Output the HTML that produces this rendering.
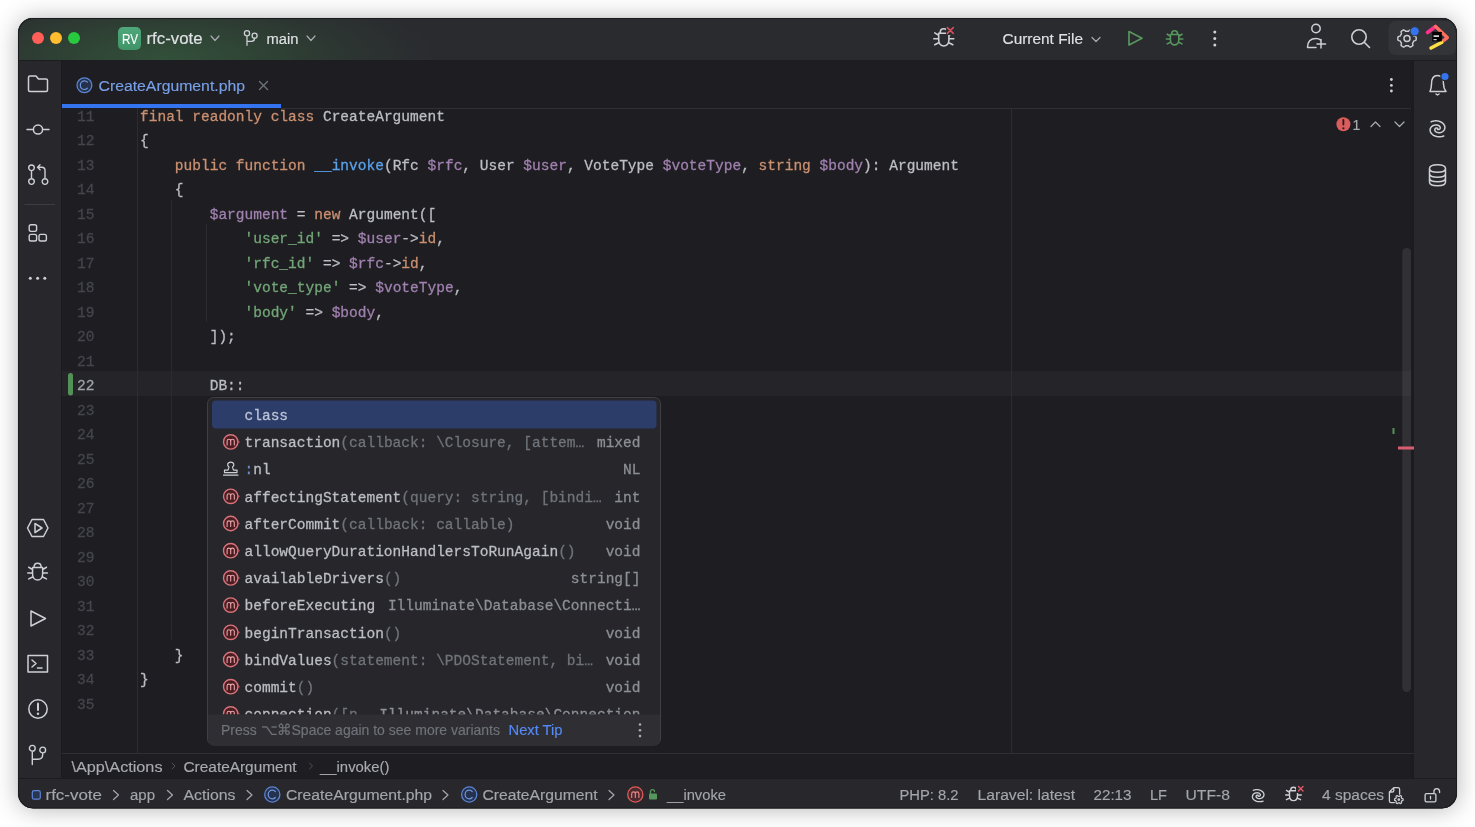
<!DOCTYPE html>
<html><head><meta charset="utf-8"><title>PhpStorm</title>
<style>
html,body{margin:0;padding:0;background:#FFFFFF;width:1475px;height:827px;overflow:hidden}
#win{position:absolute;left:18px;top:18px;width:1439px;height:790px;border-radius:15px;box-shadow:0 1px 24px rgba(0,0,0,0.30),0 0 1px rgba(0,0,0,0.35)}
svg{position:absolute;left:0;top:0;will-change:transform}
.s{font-family:"Liberation Sans",sans-serif}
.m{font-family:"Liberation Mono",monospace}
text{white-space:pre}
</style></head>
<body>
<div id="win"></div>
<svg width="1475" height="827" viewBox="0 0 1475 827">
<rect x="18" y="18" width="1439" height="790.5" rx="15" fill="#1E1E22" />
<defs><radialGradient id="tg" cx="165" cy="58" r="270" gradientUnits="userSpaceOnUse" gradientTransform="translate(165 58) scale(1 0.28) translate(-165 -58)"><stop offset="0" stop-color="#32503A"/><stop offset="0.35" stop-color="#2F4335"/><stop offset="0.7" stop-color="#2C3431"/><stop offset="1" stop-color="#2A2B2F"/></radialGradient><linearGradient id="rvg" x1="0" y1="0" x2="0" y2="1"><stop offset="0" stop-color="#4FA77A"/><stop offset="1" stop-color="#3F9468"/></linearGradient><clipPath id="winclip"><rect x="18" y="18" width="1439" height="790.5" rx="15"/></clipPath><clipPath id="popclip"><rect x="208" y="398" width="452" height="316.5"/></clipPath></defs>
<g clip-path="url(#winclip)">
<rect x="18" y="18" width="1439" height="43" rx="0" fill="#2A2B2F" />
<rect x="18" y="18" width="1439" height="43" rx="0" fill="url(#tg)" />
<line x1="18" y1="60.5" x2="1457" y2="60.5" stroke="#1C1D20" stroke-width="1" />
<circle cx="38" cy="38" r="6" fill="#FF5F57"/>
<circle cx="56" cy="38" r="6" fill="#FEBC2E"/>
<circle cx="74" cy="38" r="6" fill="#28C840"/>
<rect x="118" y="27" width="23" height="23" rx="5" fill="url(#rvg)" />
<text x="122" y="44" class="s" font-size="14.5" fill="#FFFFFF" stroke="#FFFFFF" stroke-width="0.15" textLength="16" lengthAdjust="spacingAndGlyphs" >RV</text>
<text x="146.5" y="43.7" class="s" font-size="16" fill="#DFE1E5" stroke="#DFE1E5" stroke-width="0.15" textLength="56" lengthAdjust="spacingAndGlyphs" >rfc-vote</text>
<path d="M211 36 L215 40.5 L219 36" stroke="#A8ABB0" stroke-width="1.2" fill="none" stroke-linecap="round" stroke-linejoin="round" />
<path d="M247 33.3 m-2.6 0 a2.6 2.6 0 1 0 5.2 0 a2.6 2.6 0 1 0 -5.2 0 M247 35.9 V45.3 M247 41.4 H251.5 Q254.6 41.4 254.6 38.3 M254.6 35.7 m-2.5 0 a2.5 2.5 0 1 0 5 0 a2.5 2.5 0 1 0 -5 0" stroke="#CED0D6" stroke-width="1.3" fill="none" stroke-linecap="round" stroke-linejoin="round" />
<text x="266.5" y="43.7" class="s" font-size="15.5" fill="#DFE1E5" stroke="#DFE1E5" stroke-width="0.15" textLength="32" lengthAdjust="spacingAndGlyphs" >main</text>
<path d="M307 36 L311 40.5 L315 36" stroke="#A8ABB0" stroke-width="1.2" fill="none" stroke-linecap="round" stroke-linejoin="round" />
<path d="M938.68 33.31 L948.92 33.31 L948.92 39.78 C948.92 48.07 938.68 48.07 938.68 39.78 Z M940.26 33.31 L940.26 32.33 C940.26 27.58 947.34 27.58 947.34 32.33 L947.34 33.31 M938.68 35.38 L934.77 32.94 M948.92 35.38 L952.83 32.94 M938.68 38.80 L933.80 38.80 M948.92 38.80 L953.80 38.80 M938.68 42.83 L934.77 44.78 M948.92 42.83 L952.83 44.78" stroke="#CED0D6" stroke-width="1.6" fill="none" stroke-linecap="round" stroke-linejoin="round" />
<rect x="946" y="26" width="9.5" height="9" rx="0" fill="#2A2B2F" />
<path d="M947.3 27.6 L953.3 33.4 M953.3 27.6 L947.3 33.4" stroke="#D9505F" stroke-width="1.5" fill="none" stroke-linecap="round" stroke-linejoin="round" />
<text x="1002.5" y="43.6" class="s" font-size="15.5" fill="#DFE1E5" stroke="#DFE1E5" stroke-width="0.15" textLength="80.5" lengthAdjust="spacingAndGlyphs" >Current File</text>
<path d="M1092 37.5 L1096 41.5 L1100 37.5" stroke="#A8ABB0" stroke-width="1.2" fill="none" stroke-linecap="round" stroke-linejoin="round" />
<path d="M1129 31.5 L1142 38.2 L1129 45 Z" stroke="#57965C" stroke-width="1.7" fill="none" stroke-linecap="round" stroke-linejoin="round" />
<path d="M1170.40 34.50 L1178.80 34.50 L1178.80 39.80 C1178.80 46.60 1170.40 46.60 1170.40 39.80 Z M1171.70 34.50 L1171.70 33.70 C1171.70 29.80 1177.50 29.80 1177.50 33.70 L1177.50 34.50 M1170.40 36.20 L1167.20 34.20 M1178.80 36.20 L1182.00 34.20 M1170.40 39.00 L1166.40 39.00 M1178.80 39.00 L1182.80 39.00 M1170.40 42.30 L1167.20 43.90 M1178.80 42.30 L1182.00 43.90" stroke="#57965C" stroke-width="1.6" fill="none" stroke-linecap="round" stroke-linejoin="round" />
<circle cx="1214.8" cy="32.1" r="1.5" fill="#CED0D6"/>
<circle cx="1214.8" cy="38.6" r="1.5" fill="#CED0D6"/>
<circle cx="1214.8" cy="45.1" r="1.5" fill="#CED0D6"/>
<path d="M1316 28.5 m-4.2 0 a4.2 4.2 0 1 0 8.4 0 a4.2 4.2 0 1 0 -8.4 0 M1307.5 47.5 C1307.5 41 1311 38.5 1316 38.5 C1318 38.5 1319.5 39 1320.5 40 M1307.5 47.5 H1316 M1321 39.5 V48 M1317 44 H1325.5" stroke="#CED0D6" stroke-width="1.5" fill="none" stroke-linecap="round" stroke-linejoin="round" />
<path d="M1359 37 m-7.2 0 a7.2 7.2 0 1 0 14.4 0 a7.2 7.2 0 1 0 -14.4 0 M1364.5 42.5 L1369.5 47.5" stroke="#CED0D6" stroke-width="1.6" fill="none" stroke-linecap="round" stroke-linejoin="round" />
<rect x="1388.5" y="21" width="67.5" height="34" rx="7" fill="#323438" />
<path d="M1416.20 38.50 L1416.18 39.10 L1416.12 39.70 L1415.87 40.26 L1414.92 40.62 L1413.97 40.87 L1413.65 41.26 L1413.46 41.68 L1413.24 42.10 L1412.99 42.50 L1412.71 42.88 L1412.53 43.35 L1412.80 44.30 L1412.96 45.30 L1412.60 45.80 L1412.11 46.15 L1411.60 46.47 L1411.07 46.75 L1410.52 47.00 L1409.91 47.06 L1409.12 46.42 L1408.44 45.72 L1407.94 45.64 L1407.47 45.68 L1407.00 45.70 L1406.53 45.68 L1406.06 45.64 L1405.56 45.72 L1404.88 46.42 L1404.09 47.06 L1403.48 47.00 L1402.93 46.75 L1402.40 46.47 L1401.89 46.15 L1401.40 45.80 L1401.04 45.30 L1401.20 44.30 L1401.47 43.35 L1401.29 42.88 L1401.01 42.50 L1400.76 42.10 L1400.54 41.68 L1400.35 41.26 L1400.03 40.87 L1399.08 40.62 L1398.13 40.26 L1397.88 39.70 L1397.82 39.10 L1397.80 38.50 L1397.82 37.90 L1397.88 37.30 L1398.13 36.74 L1399.08 36.38 L1400.03 36.13 L1400.35 35.74 L1400.54 35.32 L1400.76 34.90 L1401.01 34.50 L1401.29 34.12 L1401.47 33.65 L1401.20 32.70 L1401.04 31.70 L1401.40 31.20 L1401.89 30.85 L1402.40 30.53 L1402.93 30.25 L1403.48 30.00 L1404.09 29.94 L1404.88 30.58 L1405.56 31.28 L1406.06 31.36 L1406.53 31.32 L1407.00 31.30 L1407.47 31.32 L1407.94 31.36 L1408.44 31.28 L1409.12 30.58 L1409.91 29.94 L1410.52 30.00 L1411.07 30.25 L1411.60 30.53 L1412.11 30.85 L1412.60 31.20 L1412.96 31.70 L1412.80 32.70 L1412.53 33.65 L1412.71 34.12 L1412.99 34.50 L1413.24 34.90 L1413.46 35.32 L1413.65 35.74 L1413.97 36.13 L1414.92 36.38 L1415.87 36.74 L1416.12 37.30 L1416.18 37.90 Z" stroke="#CED0D6" stroke-width="1.4" fill="none" stroke-linecap="round" stroke-linejoin="round" />
<circle cx="1407" cy="38.5" r="3.02" stroke="#CED0D6" stroke-width="1.4" fill="none"/>
<circle cx="1414.7" cy="31.3" r="4.6" fill="#3574F0" stroke="#323438" stroke-width="1"/>
<g stroke-linecap="round" stroke-linejoin="round" fill="none"><path d="M1427.5 32.5 L1435.5 26.5" stroke="#FF318C" stroke-width="3.6"/><path d="M1435.5 26.5 L1447.3 37.6 L1441.5 42.3" stroke="#FF6F61" stroke-width="3.4"/><path d="M1441.5 42.5 L1431 48" stroke="#FDE047" stroke-width="3.6"/></g>
<rect x="1432.3" y="31.9" width="9.5" height="9.5" rx="0" fill="#000000" />
<rect x="1433.5" y="35.3" width="5.5" height="1.6" rx="0" fill="#FFFFFF" opacity="0.9"/>
<rect x="1433.5" y="39.2" width="3.2" height="1" rx="0" fill="#FFFFFF" />
<rect x="18" y="61" width="43" height="717" rx="0" fill="#28282C" />
<line x1="61.5" y1="61" x2="61.5" y2="778" stroke="#1B1C1F" stroke-width="1" />
<path d="M28.5 77.5 Q28.5 76 30 76 H36 L38.5 79 H46 Q47.5 79 47.5 80.5 V90 Q47.5 91.5 46 91.5 H30 Q28.5 91.5 28.5 90 Z" stroke="#CED0D6" stroke-width="1.5" fill="none" stroke-linecap="round" stroke-linejoin="round" />
<path d="M38 129.5 m-4.6 0 a4.6 4.6 0 1 0 9.2 0 a4.6 4.6 0 1 0 -9.2 0 M27 129.5 H33.4 M42.6 129.5 H49" stroke="#CED0D6" stroke-width="1.5" fill="none" stroke-linecap="round" stroke-linejoin="round" />
<path d="M31.5 167.8 m-2.8 0 a2.8 2.8 0 1 0 5.6 0 a2.8 2.8 0 1 0 -5.6 0 M31.5 170.6 V178.8 M31.5 181.6 m-2.8 0 a2.8 2.8 0 1 0 5.6 0 a2.8 2.8 0 1 0 -5.6 0 M45 181.6 m-2.8 0 a2.8 2.8 0 1 0 5.6 0 a2.8 2.8 0 1 0 -5.6 0 M45 178.8 V170.5 Q45 167.2 41.8 167.2 H37.5 M40 164.7 L37.5 167.2 L40 169.7" stroke="#CED0D6" stroke-width="1.4" fill="none" stroke-linecap="round" stroke-linejoin="round" />
<line x1="24.5" y1="204.5" x2="55" y2="204.5" stroke="#3C3E42" stroke-width="1" />
<rect x="29.2" y="224.8" width="7.4" height="6.6" rx="1.8" fill="none" stroke="#CED0D6" stroke-width="1.4"/>
<rect x="29.2" y="234.4" width="7.4" height="6.6" rx="1.8" fill="none" stroke="#CED0D6" stroke-width="1.4"/>
<rect x="39.0" y="234.4" width="7.4" height="6.6" rx="1.8" fill="none" stroke="#CED0D6" stroke-width="1.4"/>
<circle cx="30.3" cy="278.3" r="1.5" fill="#CED0D6"/>
<circle cx="37.6" cy="278.3" r="1.5" fill="#CED0D6"/>
<circle cx="44.8" cy="278.3" r="1.5" fill="#CED0D6"/>
<path d="M32 519.5 H43.5 L48 528 L43.5 536.5 H32 L27.5 528 Z M35 523.5 L42 528 L35 532.5 Z" stroke="#CED0D6" stroke-width="1.5" fill="none" stroke-linecap="round" stroke-linejoin="round" />
<path d="M32.56 567.60 L42.64 567.60 L42.64 573.96 C42.64 582.12 32.56 582.12 32.56 573.96 Z M34.12 567.60 L34.12 566.64 C34.12 561.96 41.08 561.96 41.08 566.64 L41.08 567.60 M32.56 569.64 L28.72 567.24 M42.64 569.64 L46.48 567.24 M32.56 573.00 L27.76 573.00 M42.64 573.00 L47.44 573.00 M32.56 576.96 L28.72 578.88 M42.64 576.96 L46.48 578.88" stroke="#CED0D6" stroke-width="1.5" fill="none" stroke-linecap="round" stroke-linejoin="round" />
<path d="M31 611 L45.5 618.5 L31 626 Z" stroke="#CED0D6" stroke-width="1.5" fill="none" stroke-linecap="round" stroke-linejoin="round" />
<path d="M28 655.5 H47.5 V672 H28 Z M32 660 L36 663.5 L32 667 M37.5 668 H42" stroke="#CED0D6" stroke-width="1.5" fill="none" stroke-linecap="round" stroke-linejoin="round" />
<path d="M38 709 m-9.2 0 a9.2 9.2 0 1 0 18.4 0 a9.2 9.2 0 1 0 -18.4 0" stroke="#CED0D6" stroke-width="1.5" fill="none" stroke-linecap="round" stroke-linejoin="round" />
<path d="M38 703.5 V710" stroke="#CED0D6" stroke-width="2" fill="none" stroke-linecap="round" stroke-linejoin="round" />
<circle cx="38" cy="713.7" r="1.2" fill="#CED0D6"/>
<path d="M32.3 748.3 m-2.9 0 a2.9 2.9 0 1 0 5.8 0 a2.9 2.9 0 1 0 -5.8 0 M32.3 751.2 V764.5 M32.3 759.2 H38 Q42.7 759.2 42.7 754.5 V752.9 M42.7 750 m-2.9 0 a2.9 2.9 0 1 0 5.8 0 a2.9 2.9 0 1 0 -5.8 0" stroke="#CED0D6" stroke-width="1.4" fill="none" stroke-linecap="round" stroke-linejoin="round" />
<rect x="1414" y="61" width="43" height="717" rx="0" fill="#28282C" />
<line x1="1413.5" y1="61" x2="1413.5" y2="778" stroke="#1B1C1F" stroke-width="1" />
<path d="M1430 91.5 H1446 C1444 89 1443.5 87 1443.5 84 C1443.5 78.5 1441 75.5 1437.5 75.5 C1434 75.5 1431.5 78.5 1431.5 84 C1431.5 87 1431 89 1430 91.5 Z M1436 94 L1437.5 95 L1439 94" stroke="#CED0D6" stroke-width="1.5" fill="none" stroke-linecap="round" stroke-linejoin="round" />
<circle cx="1445" cy="76.5" r="4.2" fill="#3574F0" stroke="#27282C" stroke-width="1.2"/>
<path d="M1431.19 121.67 L1432.98 121.14 L1434.81 120.87 L1436.62 120.87 L1438.35 121.11 L1439.95 121.58 L1441.37 122.24 L1442.57 123.07 L1443.54 124.02 L1444.25 125.06 L1444.70 126.14 L1444.89 127.23 L1444.83 128.29 L1444.54 129.29 L1444.05 130.19 L1443.39 130.97 L1442.59 131.62 L1441.69 132.12 L1440.74 132.46 L1439.77 132.65 L1438.82 132.70 L1437.92 132.60 L1437.10 132.39 L1436.39 132.08 L1435.80 131.69 L1435.34 131.24 L1435.01 130.77 L1434.83 130.28 L1434.77 129.81 L1434.82 129.37 L1434.98 128.97 L1435.21 128.64 L1435.51 128.38 L1435.83 128.18 L1436.17 128.06 L1436.50 128.01 L1436.81 128.02 L1437.07 128.07 L1437.28 128.16 L1437.44 128.27 L1437.55 128.37 M1443.81 135.93 L1442.02 136.46 L1440.19 136.73 L1438.38 136.73 L1436.65 136.49 L1435.05 136.02 L1433.63 135.36 L1432.43 134.53 L1431.46 133.58 L1430.75 132.54 L1430.30 131.46 L1430.11 130.37 L1430.17 129.31 L1430.46 128.31 L1430.95 127.41 L1431.61 126.63 L1432.41 125.98 L1433.31 125.48 L1434.26 125.14 L1435.23 124.95 L1436.18 124.90 L1437.08 125.00 L1437.90 125.21 L1438.61 125.52 L1439.20 125.91 L1439.66 126.36 L1439.99 126.83 L1440.17 127.32 L1440.23 127.79 L1440.18 128.23 L1440.02 128.63 L1439.79 128.96 L1439.49 129.22 L1439.17 129.42 L1438.83 129.54 L1438.50 129.59 L1438.19 129.58 L1437.93 129.53 L1437.72 129.44 L1437.56 129.33 L1437.45 129.23" stroke="#CED0D6" stroke-width="1.5" fill="none" stroke-linecap="round" stroke-linejoin="round" />
<path d="M1429.5 168.5 C1429.5 163.5 1445.5 163.5 1445.5 168.5 C1445.5 173.5 1429.5 173.5 1429.5 168.5 M1429.5 168.5 V182 C1429.5 187 1445.5 187 1445.5 182 V168.5 M1429.5 173.5 C1429.5 178.5 1445.5 178.5 1445.5 173.5 M1429.5 178 C1429.5 183 1445.5 183 1445.5 178" stroke="#CED0D6" stroke-width="1.5" fill="none" stroke-linecap="round" stroke-linejoin="round" />
<line x1="281" y1="108.5" x2="1414" y2="108.5" stroke="#2E3034" stroke-width="1" />
<circle cx="84.4" cy="85.2" r="7.4" fill="#25324D" stroke="#5B84D6" stroke-width="1.3"/>
<path d="M87.4 82.2 C86.6 81.3 85.6 80.9 84.5 80.9 C82.1 80.9 80.3 82.8 80.3 85.2 C80.3 87.6 82.1 89.5 84.5 89.5 C85.6 89.5 86.6 89.1 87.4 88.2" stroke="#6F95DD" stroke-width="1.2" fill="none" stroke-linecap="round" stroke-linejoin="round" />
<text x="98.5" y="90.6" class="s" font-size="15.5" fill="#78A0E8" stroke="#78A0E8" stroke-width="0.15" textLength="146.5" lengthAdjust="spacingAndGlyphs" >CreateArgument.php</text>
<path d="M259.5 81.5 L267.5 89.5 M267.5 81.5 L259.5 89.5" stroke="#6F737A" stroke-width="1.3" fill="none" stroke-linecap="round" stroke-linejoin="round" />
<rect x="62" y="104" width="219" height="4" rx="0" fill="#3574F0" />
<circle cx="1391.4" cy="79.5" r="1.4" fill="#CED0D6"/>
<circle cx="1391.4" cy="85.4" r="1.4" fill="#CED0D6"/>
<circle cx="1391.4" cy="91.0" r="1.4" fill="#CED0D6"/>
<g>
<rect x="62" y="371" width="1351" height="25" rx="0" fill="#252529" />
<rect x="68" y="373" width="5" height="22.5" rx="2.5" fill="#549159" />
<line x1="137.5" y1="108" x2="137.5" y2="753" stroke="#2C2D31" stroke-width="1" />
<line x1="171.5" y1="199.5" x2="171.5" y2="640.5" stroke="#2A2B2F" stroke-width="1" />
<line x1="206.5" y1="224" x2="206.5" y2="322" stroke="#2A2B2F" stroke-width="1" />
<line x1="1011.5" y1="109" x2="1011.5" y2="753" stroke="#2C2D31" stroke-width="1" />
<text x="94.5" y="120.8" class="m" font-size="14.52" fill="#45464C" stroke="#45464C" stroke-width="0.28" text-anchor="end" >11</text>
<text x="94.5" y="145.3" class="m" font-size="14.52" fill="#45464C" stroke="#45464C" stroke-width="0.28" text-anchor="end" >12</text>
<text x="94.5" y="169.8" class="m" font-size="14.52" fill="#45464C" stroke="#45464C" stroke-width="0.28" text-anchor="end" >13</text>
<text x="94.5" y="194.3" class="m" font-size="14.52" fill="#45464C" stroke="#45464C" stroke-width="0.28" text-anchor="end" >14</text>
<text x="94.5" y="218.8" class="m" font-size="14.52" fill="#45464C" stroke="#45464C" stroke-width="0.28" text-anchor="end" >15</text>
<text x="94.5" y="243.3" class="m" font-size="14.52" fill="#45464C" stroke="#45464C" stroke-width="0.28" text-anchor="end" >16</text>
<text x="94.5" y="267.8" class="m" font-size="14.52" fill="#45464C" stroke="#45464C" stroke-width="0.28" text-anchor="end" >17</text>
<text x="94.5" y="292.3" class="m" font-size="14.52" fill="#45464C" stroke="#45464C" stroke-width="0.28" text-anchor="end" >18</text>
<text x="94.5" y="316.8" class="m" font-size="14.52" fill="#45464C" stroke="#45464C" stroke-width="0.28" text-anchor="end" >19</text>
<text x="94.5" y="341.3" class="m" font-size="14.52" fill="#45464C" stroke="#45464C" stroke-width="0.28" text-anchor="end" >20</text>
<text x="94.5" y="365.8" class="m" font-size="14.52" fill="#45464C" stroke="#45464C" stroke-width="0.28" text-anchor="end" >21</text>
<text x="94.5" y="390.3" class="m" font-size="14.52" fill="#A1A3AB" stroke="#A1A3AB" stroke-width="0.28" text-anchor="end" >22</text>
<text x="94.5" y="414.8" class="m" font-size="14.52" fill="#45464C" stroke="#45464C" stroke-width="0.28" text-anchor="end" >23</text>
<text x="94.5" y="439.3" class="m" font-size="14.52" fill="#45464C" stroke="#45464C" stroke-width="0.28" text-anchor="end" >24</text>
<text x="94.5" y="463.8" class="m" font-size="14.52" fill="#45464C" stroke="#45464C" stroke-width="0.28" text-anchor="end" >25</text>
<text x="94.5" y="488.3" class="m" font-size="14.52" fill="#45464C" stroke="#45464C" stroke-width="0.28" text-anchor="end" >26</text>
<text x="94.5" y="512.8" class="m" font-size="14.52" fill="#45464C" stroke="#45464C" stroke-width="0.28" text-anchor="end" >27</text>
<text x="94.5" y="537.3" class="m" font-size="14.52" fill="#45464C" stroke="#45464C" stroke-width="0.28" text-anchor="end" >28</text>
<text x="94.5" y="561.8" class="m" font-size="14.52" fill="#45464C" stroke="#45464C" stroke-width="0.28" text-anchor="end" >29</text>
<text x="94.5" y="586.3" class="m" font-size="14.52" fill="#45464C" stroke="#45464C" stroke-width="0.28" text-anchor="end" >30</text>
<text x="94.5" y="610.8" class="m" font-size="14.52" fill="#45464C" stroke="#45464C" stroke-width="0.28" text-anchor="end" >31</text>
<text x="94.5" y="635.3" class="m" font-size="14.52" fill="#45464C" stroke="#45464C" stroke-width="0.28" text-anchor="end" >32</text>
<text x="94.5" y="659.8" class="m" font-size="14.52" fill="#45464C" stroke="#45464C" stroke-width="0.28" text-anchor="end" >33</text>
<text x="94.5" y="684.3" class="m" font-size="14.52" fill="#45464C" stroke="#45464C" stroke-width="0.28" text-anchor="end" >34</text>
<text x="94.5" y="708.8" class="m" font-size="14.52" fill="#45464C" stroke="#45464C" stroke-width="0.28" text-anchor="end" >35</text>
<text x="140.0" y="120.8" class="m" font-size="14.52" fill="#CB9070" stroke="#CB9070" stroke-width="0.28" xml:space="preserve">final readonly class </text>
<text x="322.95" y="120.8" class="m" font-size="14.52" fill="#BCBEC4" stroke="#BCBEC4" stroke-width="0.28" xml:space="preserve">CreateArgument</text>
<text x="140.0" y="145.3" class="m" font-size="14.52" fill="#BCBEC4" stroke="#BCBEC4" stroke-width="0.28" xml:space="preserve">{</text>
<text x="174.85" y="169.8" class="m" font-size="14.52" fill="#CB9070" stroke="#CB9070" stroke-width="0.28" xml:space="preserve">public function </text>
<text x="314.24" y="169.8" class="m" font-size="14.52" fill="#5AA2EA" stroke="#5AA2EA" stroke-width="0.28" xml:space="preserve">__invoke</text>
<text x="383.94" y="169.8" class="m" font-size="14.52" fill="#BCBEC4" stroke="#BCBEC4" stroke-width="0.28" xml:space="preserve">(Rfc </text>
<text x="427.5" y="169.8" class="m" font-size="14.52" fill="#A080AF" stroke="#A080AF" stroke-width="0.28" xml:space="preserve">$rfc</text>
<text x="462.34" y="169.8" class="m" font-size="14.52" fill="#BCBEC4" stroke="#BCBEC4" stroke-width="0.28" xml:space="preserve">, User </text>
<text x="523.33" y="169.8" class="m" font-size="14.52" fill="#A080AF" stroke="#A080AF" stroke-width="0.28" xml:space="preserve">$user</text>
<text x="566.89" y="169.8" class="m" font-size="14.52" fill="#BCBEC4" stroke="#BCBEC4" stroke-width="0.28" xml:space="preserve">, VoteType </text>
<text x="662.72" y="169.8" class="m" font-size="14.52" fill="#A080AF" stroke="#A080AF" stroke-width="0.28" xml:space="preserve">$voteType</text>
<text x="741.13" y="169.8" class="m" font-size="14.52" fill="#BCBEC4" stroke="#BCBEC4" stroke-width="0.28" xml:space="preserve">, </text>
<text x="758.55" y="169.8" class="m" font-size="14.52" fill="#CB9070" stroke="#CB9070" stroke-width="0.28" xml:space="preserve">string </text>
<text x="819.54" y="169.8" class="m" font-size="14.52" fill="#A080AF" stroke="#A080AF" stroke-width="0.28" xml:space="preserve">$body</text>
<text x="863.1" y="169.8" class="m" font-size="14.52" fill="#BCBEC4" stroke="#BCBEC4" stroke-width="0.28" xml:space="preserve">): Argument</text>
<text x="174.85" y="194.3" class="m" font-size="14.52" fill="#BCBEC4" stroke="#BCBEC4" stroke-width="0.28" xml:space="preserve">{</text>
<text x="209.7" y="218.8" class="m" font-size="14.52" fill="#A080AF" stroke="#A080AF" stroke-width="0.28" xml:space="preserve">$argument</text>
<text x="296.82" y="218.8" class="m" font-size="14.52" fill="#BCBEC4" stroke="#BCBEC4" stroke-width="0.28" xml:space="preserve">= </text>
<text x="314.24" y="218.8" class="m" font-size="14.52" fill="#CB9070" stroke="#CB9070" stroke-width="0.28" xml:space="preserve">new </text>
<text x="349.09" y="218.8" class="m" font-size="14.52" fill="#BCBEC4" stroke="#BCBEC4" stroke-width="0.28" xml:space="preserve">Argument([</text>
<text x="244.54" y="243.3" class="m" font-size="14.52" fill="#72A677" stroke="#72A677" stroke-width="0.28" xml:space="preserve">'user_id'</text>
<text x="331.66" y="243.3" class="m" font-size="14.52" fill="#BCBEC4" stroke="#BCBEC4" stroke-width="0.28" xml:space="preserve">=&gt; </text>
<text x="357.8" y="243.3" class="m" font-size="14.52" fill="#A080AF" stroke="#A080AF" stroke-width="0.28" xml:space="preserve">$user</text>
<text x="401.36" y="243.3" class="m" font-size="14.52" fill="#BCBEC4" stroke="#BCBEC4" stroke-width="0.28" xml:space="preserve">-&gt;</text>
<text x="418.78" y="243.3" class="m" font-size="14.52" fill="#CB9070" stroke="#CB9070" stroke-width="0.28" xml:space="preserve">id</text>
<text x="436.21" y="243.3" class="m" font-size="14.52" fill="#BCBEC4" stroke="#BCBEC4" stroke-width="0.28" xml:space="preserve">,</text>
<text x="244.54" y="267.8" class="m" font-size="14.52" fill="#72A677" stroke="#72A677" stroke-width="0.28" xml:space="preserve">'rfc_id'</text>
<text x="322.95" y="267.8" class="m" font-size="14.52" fill="#BCBEC4" stroke="#BCBEC4" stroke-width="0.28" xml:space="preserve">=&gt; </text>
<text x="349.09" y="267.8" class="m" font-size="14.52" fill="#A080AF" stroke="#A080AF" stroke-width="0.28" xml:space="preserve">$rfc</text>
<text x="383.94" y="267.8" class="m" font-size="14.52" fill="#BCBEC4" stroke="#BCBEC4" stroke-width="0.28" xml:space="preserve">-&gt;</text>
<text x="401.36" y="267.8" class="m" font-size="14.52" fill="#CB9070" stroke="#CB9070" stroke-width="0.28" xml:space="preserve">id</text>
<text x="418.78" y="267.8" class="m" font-size="14.52" fill="#BCBEC4" stroke="#BCBEC4" stroke-width="0.28" xml:space="preserve">,</text>
<text x="244.54" y="292.3" class="m" font-size="14.52" fill="#72A677" stroke="#72A677" stroke-width="0.28" xml:space="preserve">'vote_type'</text>
<text x="349.09" y="292.3" class="m" font-size="14.52" fill="#BCBEC4" stroke="#BCBEC4" stroke-width="0.28" xml:space="preserve">=&gt; </text>
<text x="375.22" y="292.3" class="m" font-size="14.52" fill="#A080AF" stroke="#A080AF" stroke-width="0.28" xml:space="preserve">$voteType</text>
<text x="453.63" y="292.3" class="m" font-size="14.52" fill="#BCBEC4" stroke="#BCBEC4" stroke-width="0.28" xml:space="preserve">,</text>
<text x="244.54" y="316.8" class="m" font-size="14.52" fill="#72A677" stroke="#72A677" stroke-width="0.28" xml:space="preserve">'body'</text>
<text x="305.53" y="316.8" class="m" font-size="14.52" fill="#BCBEC4" stroke="#BCBEC4" stroke-width="0.28" xml:space="preserve">=&gt; </text>
<text x="331.66" y="316.8" class="m" font-size="14.52" fill="#A080AF" stroke="#A080AF" stroke-width="0.28" xml:space="preserve">$body</text>
<text x="375.22" y="316.8" class="m" font-size="14.52" fill="#BCBEC4" stroke="#BCBEC4" stroke-width="0.28" xml:space="preserve">,</text>
<text x="209.7" y="341.3" class="m" font-size="14.52" fill="#BCBEC4" stroke="#BCBEC4" stroke-width="0.28" xml:space="preserve">]);</text>
<text x="209.7" y="390.3" class="m" font-size="14.52" fill="#BCBEC4" stroke="#BCBEC4" stroke-width="0.28" xml:space="preserve">DB::</text>
<text x="174.85" y="659.8" class="m" font-size="14.52" fill="#BCBEC4" stroke="#BCBEC4" stroke-width="0.28" xml:space="preserve">}</text>
<text x="140.0" y="684.3" class="m" font-size="14.52" fill="#BCBEC4" stroke="#BCBEC4" stroke-width="0.28" xml:space="preserve">}</text>
<circle cx="1343.4" cy="124.3" r="7" fill="#DB5C5C"/>
<rect x="1342.5" y="119" width="1.8" height="6.5" rx="0.9" fill="#1E1F22" />
<circle cx="1343.4" cy="128.3" r="1.1" fill="#1E1F22"/>
<text x="1352.5" y="129.5" class="s" font-size="14" fill="#A8ABB0" stroke="#A8ABB0" stroke-width="0.15" >1</text>
<path d="M1371 126.5 L1375.5 122 L1380 126.5" stroke="#A8ABB0" stroke-width="1.2" fill="none" stroke-linecap="round" stroke-linejoin="round" />
<path d="M1395 122 L1399.5 126.5 L1404 122" stroke="#A8ABB0" stroke-width="1.2" fill="none" stroke-linecap="round" stroke-linejoin="round" />
<rect x="1402.3" y="248" width="8.8" height="444" rx="4.4" fill="rgba(255,255,255,0.085)" />
<rect x="1411" y="61" width="3" height="717" rx="0" fill="#1C1C20" />
<rect x="1392.5" y="428" width="2" height="6" rx="0" fill="#549159" />
<rect x="1398" y="446.5" width="16" height="3" rx="0" fill="#D95C70" />
</g>
<rect x="207.5" y="397.5" width="453" height="347.5" rx="6" fill="#27272B" stroke="#3F3F44" stroke-width="1"/>
<rect x="212" y="400.5" width="444.5" height="28" rx="4" fill="#2C3D6A" />
<text x="244.5" y="420" class="m" font-size="14.52" fill="#BCC4D6" stroke="#BCC4D6" stroke-width="0.28" >class</text>
<g clip-path="url(#popclip)">
<circle cx="230.7" cy="441.9" r="7.2" fill="#4A1D22" stroke="#D9737B" stroke-width="1.4"/>
<path d="M227.1 444.9 V441.09999999999997 C227.1 438.7 230.7 438.7 230.7 441.09999999999997 V444.9 M230.7 441.09999999999997 C230.7 438.7 234.29999999999998 438.7 234.29999999999998 441.09999999999997 V444.9" stroke="#E8A4A8" stroke-width="1.1" fill="none" stroke-linecap="round" stroke-linejoin="round" />
<path d="M238.29999999999998 440.29999999999995 L239.89999999999998 441.9 L238.29999999999998 443.5 Z" fill="#C85A63"/>
<text x="244.5" y="447.1" class="m" font-size="14.52" fill="#BCBEC4" stroke="#BCBEC4" stroke-width="0.28" >transaction</text>
<text x="340.33" y="447.1" class="m" font-size="14.52" fill="#6F737A" stroke="#6F737A" stroke-width="0.28" xml:space="preserve">(callback: \Closure, [attem…</text>
<text x="640.5" y="447.1" class="m" font-size="14.52" fill="#8C8F96" stroke="#8C8F96" stroke-width="0.28" text-anchor="end" >mixed</text>
<path d="M223.5 475.09999999999997 H238 M224.5 472.59999999999997 H237 V470.09999999999997 H233.5 L232.5 467.09999999999997 C234.5 466.09999999999997 234.5 462.09999999999997 230.8 462.09999999999997 C227 462.09999999999997 227 466.09999999999997 229 467.09999999999997 L228 470.09999999999997 H224.5 Z" stroke="#CED0D6" stroke-width="1.2" fill="none" stroke-linecap="round" stroke-linejoin="round" />
<text x="244.5" y="474.3" class="m" font-size="14.52" fill="#6C8CC7" stroke="#6C8CC7" stroke-width="0.28" >:</text>
<text x="253.212" y="474.3" class="m" font-size="14.52" fill="#BCBEC4" stroke="#BCBEC4" stroke-width="0.28" >nl</text>
<text x="640.5" y="474.3" class="m" font-size="14.52" fill="#8C8F96" stroke="#8C8F96" stroke-width="0.28" text-anchor="end" >NL</text>
<circle cx="230.7" cy="496.3" r="7.2" fill="#4A1D22" stroke="#D9737B" stroke-width="1.4"/>
<path d="M227.1 499.3 V495.5 C227.1 493.1 230.7 493.1 230.7 495.5 V499.3 M230.7 495.5 C230.7 493.1 234.29999999999998 493.1 234.29999999999998 495.5 V499.3" stroke="#E8A4A8" stroke-width="1.1" fill="none" stroke-linecap="round" stroke-linejoin="round" />
<path d="M238.29999999999998 494.7 L239.89999999999998 496.3 L238.29999999999998 497.90000000000003 Z" fill="#C85A63"/>
<text x="244.5" y="501.5" class="m" font-size="14.52" fill="#BCBEC4" stroke="#BCBEC4" stroke-width="0.28" >affectingStatement</text>
<text x="401.32" y="501.5" class="m" font-size="14.52" fill="#6F737A" stroke="#6F737A" stroke-width="0.28" xml:space="preserve">(query: string, [bindi…</text>
<text x="640.5" y="501.5" class="m" font-size="14.52" fill="#8C8F96" stroke="#8C8F96" stroke-width="0.28" text-anchor="end" >int</text>
<circle cx="230.7" cy="523.5" r="7.2" fill="#4A1D22" stroke="#D9737B" stroke-width="1.4"/>
<path d="M227.1 526.5 V522.7 C227.1 520.3 230.7 520.3 230.7 522.7 V526.5 M230.7 522.7 C230.7 520.3 234.29999999999998 520.3 234.29999999999998 522.7 V526.5" stroke="#E8A4A8" stroke-width="1.1" fill="none" stroke-linecap="round" stroke-linejoin="round" />
<path d="M238.29999999999998 521.9 L239.89999999999998 523.5 L238.29999999999998 525.1 Z" fill="#C85A63"/>
<text x="244.5" y="528.7" class="m" font-size="14.52" fill="#BCBEC4" stroke="#BCBEC4" stroke-width="0.28" >afterCommit</text>
<text x="340.33" y="528.7" class="m" font-size="14.52" fill="#6F737A" stroke="#6F737A" stroke-width="0.28" xml:space="preserve">(callback: callable)</text>
<text x="640.5" y="528.7" class="m" font-size="14.52" fill="#8C8F96" stroke="#8C8F96" stroke-width="0.28" text-anchor="end" >void</text>
<circle cx="230.7" cy="550.7" r="7.2" fill="#4A1D22" stroke="#D9737B" stroke-width="1.4"/>
<path d="M227.1 553.7 V549.9000000000001 C227.1 547.5 230.7 547.5 230.7 549.9000000000001 V553.7 M230.7 549.9000000000001 C230.7 547.5 234.29999999999998 547.5 234.29999999999998 549.9000000000001 V553.7" stroke="#E8A4A8" stroke-width="1.1" fill="none" stroke-linecap="round" stroke-linejoin="round" />
<path d="M238.29999999999998 549.1 L239.89999999999998 550.7 L238.29999999999998 552.3000000000001 Z" fill="#C85A63"/>
<text x="244.5" y="555.9" class="m" font-size="14.52" fill="#BCBEC4" stroke="#BCBEC4" stroke-width="0.28" >allowQueryDurationHandlersToRunAgain</text>
<text x="558.13" y="555.9" class="m" font-size="14.52" fill="#6F737A" stroke="#6F737A" stroke-width="0.28" xml:space="preserve">()</text>
<text x="640.5" y="555.9" class="m" font-size="14.52" fill="#8C8F96" stroke="#8C8F96" stroke-width="0.28" text-anchor="end" >void</text>
<circle cx="230.7" cy="577.9" r="7.2" fill="#4A1D22" stroke="#D9737B" stroke-width="1.4"/>
<path d="M227.1 580.9 V577.1 C227.1 574.6999999999999 230.7 574.6999999999999 230.7 577.1 V580.9 M230.7 577.1 C230.7 574.6999999999999 234.29999999999998 574.6999999999999 234.29999999999998 577.1 V580.9" stroke="#E8A4A8" stroke-width="1.1" fill="none" stroke-linecap="round" stroke-linejoin="round" />
<path d="M238.29999999999998 576.3 L239.89999999999998 577.9 L238.29999999999998 579.5 Z" fill="#C85A63"/>
<text x="244.5" y="583.1" class="m" font-size="14.52" fill="#BCBEC4" stroke="#BCBEC4" stroke-width="0.28" >availableDrivers</text>
<text x="383.89" y="583.1" class="m" font-size="14.52" fill="#6F737A" stroke="#6F737A" stroke-width="0.28" xml:space="preserve">()</text>
<text x="640.5" y="583.1" class="m" font-size="14.52" fill="#8C8F96" stroke="#8C8F96" stroke-width="0.28" text-anchor="end" >string[]</text>
<circle cx="230.7" cy="605.1" r="7.2" fill="#4A1D22" stroke="#D9737B" stroke-width="1.4"/>
<path d="M227.1 608.1 V604.3000000000001 C227.1 601.9 230.7 601.9 230.7 604.3000000000001 V608.1 M230.7 604.3000000000001 C230.7 601.9 234.29999999999998 601.9 234.29999999999998 604.3000000000001 V608.1" stroke="#E8A4A8" stroke-width="1.1" fill="none" stroke-linecap="round" stroke-linejoin="round" />
<path d="M238.29999999999998 603.5 L239.89999999999998 605.1 L238.29999999999998 606.7 Z" fill="#C85A63"/>
<text x="244.5" y="610.3" class="m" font-size="14.52" fill="#BCBEC4" stroke="#BCBEC4" stroke-width="0.28" >beforeExecuting</text>
<text x="640.5" y="610.3" class="m" font-size="14.52" fill="#8C8F96" stroke="#8C8F96" stroke-width="0.28" text-anchor="end" >Illuminate\Database\Connecti…</text>
<circle cx="230.7" cy="632.3" r="7.2" fill="#4A1D22" stroke="#D9737B" stroke-width="1.4"/>
<path d="M227.1 635.3 V631.5 C227.1 629.0999999999999 230.7 629.0999999999999 230.7 631.5 V635.3 M230.7 631.5 C230.7 629.0999999999999 234.29999999999998 629.0999999999999 234.29999999999998 631.5 V635.3" stroke="#E8A4A8" stroke-width="1.1" fill="none" stroke-linecap="round" stroke-linejoin="round" />
<path d="M238.29999999999998 630.6999999999999 L239.89999999999998 632.3 L238.29999999999998 633.9 Z" fill="#C85A63"/>
<text x="244.5" y="637.5" class="m" font-size="14.52" fill="#BCBEC4" stroke="#BCBEC4" stroke-width="0.28" >beginTransaction</text>
<text x="383.89" y="637.5" class="m" font-size="14.52" fill="#6F737A" stroke="#6F737A" stroke-width="0.28" xml:space="preserve">()</text>
<text x="640.5" y="637.5" class="m" font-size="14.52" fill="#8C8F96" stroke="#8C8F96" stroke-width="0.28" text-anchor="end" >void</text>
<circle cx="230.7" cy="659.5" r="7.2" fill="#4A1D22" stroke="#D9737B" stroke-width="1.4"/>
<path d="M227.1 662.5 V658.7 C227.1 656.3 230.7 656.3 230.7 658.7 V662.5 M230.7 658.7 C230.7 656.3 234.29999999999998 656.3 234.29999999999998 658.7 V662.5" stroke="#E8A4A8" stroke-width="1.1" fill="none" stroke-linecap="round" stroke-linejoin="round" />
<path d="M238.29999999999998 657.9 L239.89999999999998 659.5 L238.29999999999998 661.1 Z" fill="#C85A63"/>
<text x="244.5" y="664.7" class="m" font-size="14.52" fill="#BCBEC4" stroke="#BCBEC4" stroke-width="0.28" >bindValues</text>
<text x="331.62" y="664.7" class="m" font-size="14.52" fill="#6F737A" stroke="#6F737A" stroke-width="0.28" xml:space="preserve">(statement: \PDOStatement, bi…</text>
<text x="640.5" y="664.7" class="m" font-size="14.52" fill="#8C8F96" stroke="#8C8F96" stroke-width="0.28" text-anchor="end" >void</text>
<circle cx="230.7" cy="686.7" r="7.2" fill="#4A1D22" stroke="#D9737B" stroke-width="1.4"/>
<path d="M227.1 689.7 V685.9000000000001 C227.1 683.5 230.7 683.5 230.7 685.9000000000001 V689.7 M230.7 685.9000000000001 C230.7 683.5 234.29999999999998 683.5 234.29999999999998 685.9000000000001 V689.7" stroke="#E8A4A8" stroke-width="1.1" fill="none" stroke-linecap="round" stroke-linejoin="round" />
<path d="M238.29999999999998 685.1 L239.89999999999998 686.7 L238.29999999999998 688.3000000000001 Z" fill="#C85A63"/>
<text x="244.5" y="691.9" class="m" font-size="14.52" fill="#BCBEC4" stroke="#BCBEC4" stroke-width="0.28" >commit</text>
<text x="296.77" y="691.9" class="m" font-size="14.52" fill="#6F737A" stroke="#6F737A" stroke-width="0.28" xml:space="preserve">()</text>
<text x="640.5" y="691.9" class="m" font-size="14.52" fill="#8C8F96" stroke="#8C8F96" stroke-width="0.28" text-anchor="end" >void</text>
<circle cx="230.7" cy="713.9" r="7.2" fill="#4A1D22" stroke="#D9737B" stroke-width="1.4"/>
<path d="M227.1 716.9 V713.1 C227.1 710.6999999999999 230.7 710.6999999999999 230.7 713.1 V716.9 M230.7 713.1 C230.7 710.6999999999999 234.29999999999998 710.6999999999999 234.29999999999998 713.1 V716.9" stroke="#E8A4A8" stroke-width="1.1" fill="none" stroke-linecap="round" stroke-linejoin="round" />
<path d="M238.29999999999998 712.3 L239.89999999999998 713.9 L238.29999999999998 715.5 Z" fill="#C85A63"/>
<text x="244.5" y="719.1" class="m" font-size="14.52" fill="#BCBEC4" stroke="#BCBEC4" stroke-width="0.28" >connection</text>
<text x="331.62" y="719.1" class="m" font-size="14.52" fill="#6F737A" stroke="#6F737A" stroke-width="0.28" xml:space="preserve">([n…</text>
<text x="640.5" y="719.1" class="m" font-size="14.52" fill="#8C8F96" stroke="#8C8F96" stroke-width="0.28" text-anchor="end" >Illuminate\Database\Connection</text>
</g>
<path d="M208 714.5 H660 V739 Q660 745 654 745 H214 Q208 745 208 739 Z" fill="#2F2F33"/>
<text x="221" y="735.3" class="s" font-size="14.5" fill="#6F737A" stroke="#6F737A" stroke-width="0.15" textLength="279" lengthAdjust="spacingAndGlyphs" >Press ⌥⌘Space again to see more variants</text>
<text x="508.5" y="735.3" class="s" font-size="14.5" fill="#548AF7" stroke="#548AF7" stroke-width="0.15" textLength="54" lengthAdjust="spacingAndGlyphs" >Next Tip</text>
<circle cx="640" cy="724.5" r="1.3" fill="#A8ABB0"/>
<circle cx="640" cy="730.3" r="1.3" fill="#A8ABB0"/>
<circle cx="640" cy="736.1" r="1.3" fill="#A8ABB0"/>
<line x1="62" y1="753.5" x2="1414" y2="753.5" stroke="#2E3034" stroke-width="1" />
<text x="71.5" y="771.8" class="s" font-size="15.5" fill="#A9ABB1" stroke="#A9ABB1" stroke-width="0.15" textLength="91" lengthAdjust="spacingAndGlyphs" >\App\Actions</text>
<path d="M172 763 L175 766 L172 769" stroke="#4E5157" stroke-width="1" fill="none" stroke-linecap="round" stroke-linejoin="round" />
<text x="183.5" y="771.8" class="s" font-size="15.5" fill="#A9ABB1" stroke="#A9ABB1" stroke-width="0.15" textLength="113" lengthAdjust="spacingAndGlyphs" >CreateArgument</text>
<path d="M309.5 763 L312.5 766 L309.5 769" stroke="#4E5157" stroke-width="1" fill="none" stroke-linecap="round" stroke-linejoin="round" />
<text x="320" y="771.8" class="s" font-size="15.5" fill="#A9ABB1" stroke="#A9ABB1" stroke-width="0.15" textLength="69.5" lengthAdjust="spacingAndGlyphs" >__invoke()</text>
<rect x="18" y="778" width="1439" height="30" rx="0" fill="#28282C" />
<line x1="18" y1="778.5" x2="1457" y2="778.5" stroke="#1B1C1F" stroke-width="1" />
<rect x="32.3" y="790.7" width="8" height="8.5" rx="1.8" fill="#2A3550" stroke="#5B84D6" stroke-width="1.2"/>
<text x="45.5" y="799.8" class="s" font-size="15.5" fill="#A3A6AC" stroke="#A3A6AC" stroke-width="0.15" textLength="56.5" lengthAdjust="spacingAndGlyphs" >rfc-vote</text>
<path d="M113.5 790.5 L118.5 795 L113.5 799.5" stroke="#A3A6AC" stroke-width="1.2" fill="none" stroke-linecap="round" stroke-linejoin="round" />
<path d="M167.5 790.5 L172.5 795 L167.5 799.5" stroke="#A3A6AC" stroke-width="1.2" fill="none" stroke-linecap="round" stroke-linejoin="round" />
<text x="130" y="799.8" class="s" font-size="15.5" fill="#A3A6AC" stroke="#A3A6AC" stroke-width="0.15" textLength="25" lengthAdjust="spacingAndGlyphs" >app</text>
<path d="M247 790.5 L252 795 L247 799.5" stroke="#A3A6AC" stroke-width="1.2" fill="none" stroke-linecap="round" stroke-linejoin="round" />
<text x="183.5" y="799.8" class="s" font-size="15.5" fill="#A3A6AC" stroke="#A3A6AC" stroke-width="0.15" textLength="52" lengthAdjust="spacingAndGlyphs" >Actions</text>
<circle cx="272.3" cy="794.5" r="7.6" fill="#25324D" stroke="#5B84D6" stroke-width="1.3"/>
<path d="M275.3 791.5 C274.5 790.6 273.5 790.2 272.40000000000003 790.2 C270.0 790.2 268.2 792.1 268.2 794.5 C268.2 796.9 270.0 798.8 272.40000000000003 798.8 C273.5 798.8 274.5 798.4 275.3 797.5" stroke="#6F95DD" stroke-width="1.2" fill="none" stroke-linecap="round" stroke-linejoin="round" />
<text x="286" y="799.8" class="s" font-size="15.5" fill="#A3A6AC" stroke="#A3A6AC" stroke-width="0.15" textLength="146" lengthAdjust="spacingAndGlyphs" >CreateArgument.php</text>
<path d="M443 790.5 L448 795 L443 799.5" stroke="#A3A6AC" stroke-width="1.2" fill="none" stroke-linecap="round" stroke-linejoin="round" />
<circle cx="469.2" cy="794.5" r="7.6" fill="#25324D" stroke="#5B84D6" stroke-width="1.3"/>
<path d="M472.2 791.5 C471.4 790.6 470.4 790.2 469.3 790.2 C466.9 790.2 465.09999999999997 792.1 465.09999999999997 794.5 C465.09999999999997 796.9 466.9 798.8 469.3 798.8 C470.4 798.8 471.4 798.4 472.2 797.5" stroke="#6F95DD" stroke-width="1.2" fill="none" stroke-linecap="round" stroke-linejoin="round" />
<text x="482.5" y="799.8" class="s" font-size="15.5" fill="#A3A6AC" stroke="#A3A6AC" stroke-width="0.15" textLength="115" lengthAdjust="spacingAndGlyphs" >CreateArgument</text>
<path d="M609 790.5 L614 795 L609 799.5" stroke="#A3A6AC" stroke-width="1.2" fill="none" stroke-linecap="round" stroke-linejoin="round" />
<circle cx="635.3" cy="794.5" r="7.6" fill="#4A2A2C" stroke="#E05A5A" stroke-width="1.3"/>
<path d="M631.7 797.5 V793.7 C631.7 791.3 635.3 791.3 635.3 793.7 V797.5 M635.3 793.7 C635.3 791.3 638.9 791.3 638.9 793.7 V797.5" stroke="#F08A8A" stroke-width="1.1" fill="none" stroke-linecap="round" stroke-linejoin="round" />
<rect x="649" y="793.5" width="8" height="6" rx="1" fill="#57965C" />
<path d="M650.5 793.5 V791.5 C650.5 789 654.5 789 654.5 791.5" stroke="#57965C" stroke-width="1.3" fill="none" stroke-linecap="round" stroke-linejoin="round" />
<text x="667" y="799.8" class="s" font-size="15.5" fill="#A3A6AC" stroke="#A3A6AC" stroke-width="0.15" textLength="59" lengthAdjust="spacingAndGlyphs" >__invoke</text>
<text x="899.5" y="799.8" class="s" font-size="15.5" fill="#A3A6AC" stroke="#A3A6AC" stroke-width="0.15" textLength="59" lengthAdjust="spacingAndGlyphs" >PHP: 8.2</text>
<text x="977.5" y="799.8" class="s" font-size="15.5" fill="#A3A6AC" stroke="#A3A6AC" stroke-width="0.15" textLength="97.5" lengthAdjust="spacingAndGlyphs" >Laravel: latest</text>
<text x="1093.5" y="799.8" class="s" font-size="15.5" fill="#A3A6AC" stroke="#A3A6AC" stroke-width="0.15" textLength="38" lengthAdjust="spacingAndGlyphs" >22:13</text>
<text x="1150" y="799.8" class="s" font-size="15.5" fill="#A3A6AC" stroke="#A3A6AC" stroke-width="0.15" textLength="17" lengthAdjust="spacingAndGlyphs" >LF</text>
<text x="1185.5" y="799.8" class="s" font-size="15.5" fill="#A3A6AC" stroke="#A3A6AC" stroke-width="0.15" textLength="44.5" lengthAdjust="spacingAndGlyphs" >UTF-8</text>
<path d="M1253.27 790.29 L1254.67 789.89 L1256.10 789.69 L1257.51 789.68 L1258.86 789.87 L1260.11 790.22 L1261.22 790.73 L1262.17 791.35 L1262.92 792.07 L1263.48 792.86 L1263.83 793.68 L1263.98 794.51 L1263.93 795.32 L1263.71 796.07 L1263.32 796.75 L1262.80 797.35 L1262.18 797.84 L1261.48 798.22 L1260.73 798.48 L1259.98 798.62 L1259.23 798.65 L1258.53 798.59 L1257.89 798.42 L1257.33 798.19 L1256.87 797.89 L1256.51 797.55 L1256.26 797.19 L1256.11 796.82 L1256.06 796.46 L1256.11 796.13 L1256.23 795.83 L1256.41 795.58 L1256.64 795.38 L1256.90 795.23 L1257.16 795.14 L1257.42 795.10 L1257.66 795.11 L1257.86 795.15 L1258.03 795.21 L1258.15 795.30 L1258.24 795.37 M1263.13 801.11 L1261.73 801.51 L1260.30 801.71 L1258.89 801.72 L1257.54 801.53 L1256.29 801.18 L1255.18 800.67 L1254.23 800.05 L1253.48 799.33 L1252.92 798.54 L1252.57 797.72 L1252.42 796.89 L1252.47 796.08 L1252.69 795.33 L1253.08 794.65 L1253.60 794.05 L1254.22 793.56 L1254.92 793.18 L1255.67 792.92 L1256.42 792.78 L1257.17 792.75 L1257.87 792.81 L1258.51 792.98 L1259.07 793.21 L1259.53 793.51 L1259.89 793.85 L1260.14 794.21 L1260.29 794.58 L1260.34 794.94 L1260.29 795.27 L1260.17 795.57 L1259.99 795.82 L1259.76 796.02 L1259.50 796.17 L1259.24 796.26 L1258.98 796.30 L1258.74 796.29 L1258.54 796.25 L1258.37 796.19 L1258.25 796.10 L1258.16 796.03" stroke="#CED0D6" stroke-width="1.3" fill="none" stroke-linecap="round" stroke-linejoin="round" />
<path d="M1289.51 790.73 L1297.49 790.73 L1297.49 795.76 C1297.49 802.22 1289.51 802.22 1289.51 795.76 Z M1290.74 790.73 L1290.74 789.97 C1290.74 786.26 1296.26 786.26 1296.26 789.97 L1296.26 790.73 M1289.51 792.34 L1286.47 790.44 M1297.49 792.34 L1300.53 790.44 M1289.51 795.00 L1285.71 795.00 M1297.49 795.00 L1301.29 795.00 M1289.51 798.13 L1286.47 799.65 M1297.49 798.13 L1300.53 799.65" stroke="#CED0D6" stroke-width="1.4" fill="none" stroke-linecap="round" stroke-linejoin="round" />
<rect x="1296" y="784" width="9" height="9" rx="0" fill="#28282C" />
<path d="M1298.5 786.5 L1303 791 M1303 786.5 L1298.5 791" stroke="#E55765" stroke-width="1.4" fill="none" stroke-linecap="round" stroke-linejoin="round" />
<text x="1322" y="799.8" class="s" font-size="15.5" fill="#A3A6AC" stroke="#A3A6AC" stroke-width="0.15" textLength="62" lengthAdjust="spacingAndGlyphs" >4 spaces</text>
<path d="M1393.8 787.6 H1397.9 Q1399.6 787.6 1399.6 789.3 V794.2 M1394.3 802.6 H1391 Q1389.4 802.6 1389.4 801 V792 L1393.8 787.6 V790.4 Q1393.8 792 1392.2 792 H1389.4" stroke="#CED0D6" stroke-width="1.3" fill="none" stroke-linecap="round" stroke-linejoin="round" />
<path d="M1403.10 799.60 L1403.09 799.88 L1403.06 800.16 L1402.93 800.42 L1402.42 800.57 L1401.91 800.66 L1401.76 800.82 L1401.67 801.02 L1401.57 801.20 L1401.46 801.38 L1401.34 801.55 L1401.27 801.77 L1401.45 802.25 L1401.58 802.77 L1401.42 803.01 L1401.19 803.18 L1400.95 803.32 L1400.70 803.46 L1400.45 803.57 L1400.15 803.59 L1399.77 803.22 L1399.44 802.82 L1399.22 802.77 L1399.01 802.79 L1398.80 802.80 L1398.59 802.79 L1398.38 802.77 L1398.16 802.82 L1397.83 803.22 L1397.45 803.59 L1397.15 803.57 L1396.90 803.46 L1396.65 803.32 L1396.41 803.18 L1396.18 803.01 L1396.02 802.77 L1396.15 802.25 L1396.33 801.77 L1396.26 801.55 L1396.14 801.38 L1396.03 801.20 L1395.93 801.02 L1395.84 800.82 L1395.69 800.66 L1395.18 800.57 L1394.67 800.42 L1394.54 800.16 L1394.51 799.88 L1394.50 799.60 L1394.51 799.32 L1394.54 799.04 L1394.67 798.78 L1395.18 798.63 L1395.69 798.54 L1395.84 798.38 L1395.93 798.18 L1396.03 798.00 L1396.14 797.82 L1396.26 797.65 L1396.33 797.43 L1396.15 796.95 L1396.02 796.43 L1396.18 796.19 L1396.41 796.02 L1396.65 795.88 L1396.90 795.74 L1397.15 795.63 L1397.45 795.61 L1397.83 795.98 L1398.16 796.38 L1398.38 796.43 L1398.59 796.41 L1398.80 796.40 L1399.01 796.41 L1399.22 796.43 L1399.44 796.38 L1399.77 795.98 L1400.15 795.61 L1400.45 795.63 L1400.70 795.74 L1400.95 795.88 L1401.19 796.02 L1401.42 796.19 L1401.58 796.43 L1401.45 796.95 L1401.27 797.43 L1401.34 797.65 L1401.46 797.82 L1401.57 798.00 L1401.67 798.18 L1401.76 798.38 L1401.91 798.54 L1402.42 798.63 L1402.93 798.78 L1403.06 799.04 L1403.09 799.32 Z" stroke="#CED0D6" stroke-width="1.2" fill="none" stroke-linecap="round" stroke-linejoin="round" />
<circle cx="1398.8" cy="799.6" r="0.80" stroke="#CED0D6" stroke-width="1.2" fill="none"/>
<path d="M1426.5 793.6 H1434.5 Q1435.9 793.6 1435.9 795 V800.4 Q1435.9 801.8 1434.5 801.8 H1426.5 Q1425.1 801.8 1425.1 800.4 V795 Q1425.1 793.6 1426.5 793.6 Z M1430.5 796.3 V799 M1433.9 793.6 V791.8 C1433.9 787.6 1439.6 787.6 1439.6 791.8 V792.6" stroke="#CED0D6" stroke-width="1.3" fill="none" stroke-linecap="round" stroke-linejoin="round" />
</g>
<rect x="18.5" y="18.5" width="1438" height="789.5" rx="14.5" fill="none" stroke="#1B1C1F" stroke-width="1"/>
</svg>
</body></html>
